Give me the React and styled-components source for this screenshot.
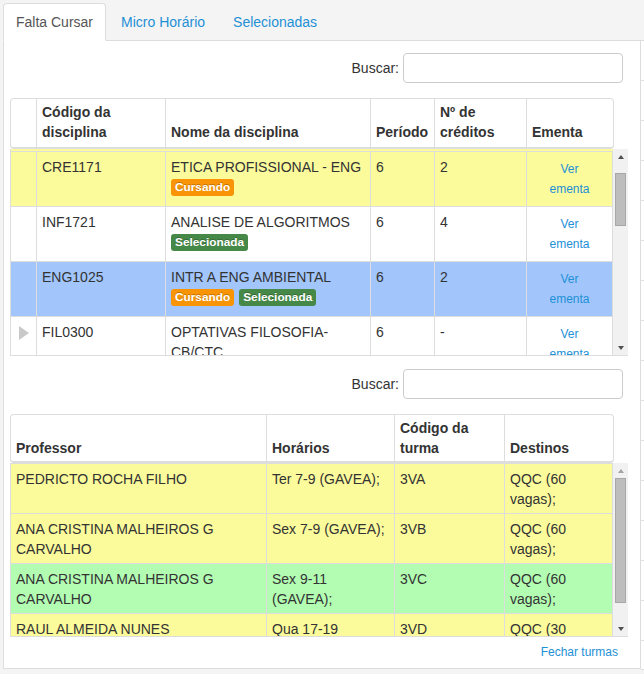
import React from 'react'
import styled, { createGlobalStyle } from 'styled-components'

const GlobalStyle = createGlobalStyle`
    html, body {
        margin: 0;
        padding: 0;
        background: #f4f4f4;
        font-family: "Liberation Sans", Arial, sans-serif;
        font-size: 14px;
        color: #333333;
    }
`;

const LINK = '#1e90d6';

const Page = styled.div`
    display: flex;
    align-items: flex-start;
    padding: 3px 0 0 3px;
    height: 674px;
    box-sizing: border-box;
    overflow: hidden;
`;

const Panel = styled.div`
    width: 638px;
    flex-shrink: 0;
    display: flex;
    flex-direction: column;
`;

const TabBar = styled.ul`
    display: flex;
    margin: 0;
    padding: 0;
    list-style: none;
    border-bottom: 1px solid #dddddd;
`;

const Tab = styled.li`
    padding: 9px 12px 8px;
    line-height: 19px;
    margin-right: 2px;
    margin-bottom: -1px;
    border: 1px solid ${p => (p.$active ? '#dddddd' : 'transparent')};
    border-bottom-color: ${p => (p.$active ? '#ffffff' : 'transparent')};
    border-radius: 4px 4px 0 0;
    background: ${p => (p.$active ? '#ffffff' : 'transparent')};
    color: ${p => (p.$active ? '#555555' : LINK)};
`;

const TabContent = styled.div`
    background: #ffffff;
    border: 1px solid #dddddd;
    border-top: none;
    height: 627px;
    padding: 0 11px 0 6px;
    display: flex;
    flex-direction: column;
`;

const SearchRow = styled.div`
    display: flex;
    justify-content: flex-end;
    align-items: center;
    gap: 4px;
    padding-right: 6px;
    margin-top: ${p => p.$top}px;
    label {
        color: #333333;
    }
    input {
        width: 220px;
        height: 30px;
        box-sizing: border-box;
        border: 1px solid #cccccc;
        border-radius: 4px;
        font: inherit;
        outline: none;
    }
`;

const TableHead = styled.div`
    margin-top: 15px;
    width: 604px;
    height: ${p => p.$height}px;
    box-sizing: border-box;
    border: 1px solid #dddddd;
    border-bottom-width: 2px;
    border-radius: 4px;
    display: grid;
    grid-template-columns: ${p => p.$cols};
    font-weight: bold;
`;

const HeadCell = styled.div`
    display: flex;
    align-items: flex-end;
    padding: 0 5px ${p => p.$pb}px;
    line-height: 20px;
    border-right: 1px solid #dddddd;
    &:last-child {
        border-right: none;
    }
`;

const TableBody = styled.div`
    display: flex;
    height: ${p => p.$height}px;
    width: 618px;
    box-sizing: border-box;
    border-left: 1px solid #dddddd;
    border-bottom: 1px solid #dddddd;
    overflow: hidden;
`;

const Rows = styled.div`
    width: 602px;
    flex-shrink: 0;
    overflow: hidden;
`;

const Row = styled.div`
    display: grid;
    grid-template-columns: ${p => p.$cols};
    height: ${p => p.$height}px;
    box-sizing: border-box;
    border-top: 1px solid #dddddd;
    background: ${p => p.$bg};
    &:first-child {
        border-top: none;
        padding-top: ${p => p.$firstGap}px;
        height: ${p => p.$height + p.$firstGap - 1}px;
        background-image: linear-gradient(#dddddd, #dddddd);
        background-size: 100% 1px;
        background-position: 0 ${p => p.$firstGap - 1}px;
        background-repeat: no-repeat;
    }
`;

const Cell = styled.div`
    padding: 5px;
    line-height: 20px;
    border-right: 1px solid #dddddd;
    overflow: hidden;
`;

const EmentaCell = styled(Cell)`
    display: flex;
    align-items: center;
    justify-content: center;
    text-align: center;
    padding: 0 18px;
    font-size: 12px;
    color: ${LINK};
`;

const ExpandCell = styled(Cell)`
    display: flex;
    justify-content: center;
    padding-top: 8px;
`;

const Badges = styled.div`
    display: flex;
    gap: 5px;
    margin-top: 2px;
`;

const Badge = styled.span`
    display: inline-block;
    padding: 2px 4px;
    font-size: 11.844px;
    font-weight: bold;
    line-height: 13px;
    color: #ffffff;
    border-radius: 3px;
    text-shadow: 0 -1px 0 rgba(0, 0, 0, 0.25);
    background: ${p => (p.$kind === 'cursando' ? '#f89406' : '#468847')};
`;

const Scrollbar = styled.div`
    width: 15px;
    flex-shrink: 0;
    background: #f1f1f1;
    display: flex;
    flex-direction: column;
    align-items: center;
`;

const Arrow = styled.div`
    height: 15px;
    width: 15px;
    display: flex;
    align-items: center;
    justify-content: center;
    flex-shrink: 0;
    &::after {
        content: '';
        width: 0;
        height: 0;
        border-left: 3.5px solid transparent;
        border-right: 3.5px solid transparent;
        ${p => (p.$down ? 'border-top' : 'border-bottom')}: 4px solid ${p => (p.$disabled ? '#a3a3a3' : '#505050')};
    }
`;

const Thumb = styled.div`
    width: 11px;
    box-sizing: border-box;
    margin-top: ${p => p.$top}px;
    height: ${p => p.$height}px;
    background: #bdbdbd;
    border: 1px solid #a8a8a8;
`;

const Spacer = styled.div`
    flex: 1;
`;

const Footer = styled.div`
    display: flex;
    justify-content: flex-end;
    padding-right: 11px;
    margin-top: 7px;
    font-size: 12px;
    line-height: 16px;
    color: ${LINK};
`;

const SideStrip = styled.div`
    flex: 1;
    margin-top: 37px;
    height: 628px;
    background: repeating-linear-gradient(#ffffff 0 39px, #e3e3e3 39px 40px);
    border-top: 1px solid #dddddd;
    border-bottom: 1px solid #dddddd;
`;

const COLS1 = '26px 129px 205px 64px 92px 86px';
const COLS2 = '256px 128px 110px 108px';

const YELLOW = '#fbfb9c';
const BLUE = '#a2c6fc';
const GREEN = '#b3fdb3';
const WHITE = '#ffffff';

const disciplinas = [
    { code: 'CRE1171', name: 'ETICA PROFISSIONAL - ENG', per: '6', cr: '2', bg: YELLOW, badges: ['cursando'] },
    { code: 'INF1721', name: 'ANALISE DE ALGORITMOS', per: '6', cr: '4', bg: WHITE, badges: ['selecionada'] },
    { code: 'ENG1025', name: 'INTR A ENG AMBIENTAL', per: '6', cr: '2', bg: BLUE, badges: ['cursando', 'selecionada'] },
    { code: 'FIL0300', name: 'OPTATIVAS FILOSOFIA-CB/CTC', per: '6', cr: '-', bg: WHITE, badges: [], expand: true },
];

const turmas = [
    { prof: 'PEDRICTO ROCHA FILHO', hor: 'Ter 7-9 (GAVEA);', cod: '3VA', dest: 'QQC (60 vagas);', bg: YELLOW },
    { prof: 'ANA CRISTINA MALHEIROS G CARVALHO', hor: 'Sex 7-9 (GAVEA);', cod: '3VB', dest: 'QQC (60 vagas);', bg: YELLOW },
    { prof: 'ANA CRISTINA MALHEIROS G CARVALHO', hor: 'Sex 9-11 (GAVEA);', cod: '3VC', dest: 'QQC (60 vagas);', bg: GREEN },
    { prof: 'RAUL ALMEIDA NUNES', hor: 'Qua 17-19', cod: '3VD', dest: 'QQC (30 vagas);', bg: YELLOW },
];

const badgeLabel = { cursando: 'Cursando', selecionada: 'Selecionada' };

function ScrollTrack({ thumbTop, thumbHeight, upDisabled }) {
    return (
        <Scrollbar>
            <Arrow $disabled={upDisabled} />
            <Thumb $top={thumbTop} $height={thumbHeight} />
            <Spacer />
            <Arrow $down />
        </Scrollbar>
    );
}

export default function App() {
    return (
        <>
            <GlobalStyle />
            <Page>
                <Panel>
                    <TabBar>
                        <Tab $active>Falta Cursar</Tab>
                        <Tab>Micro Horário</Tab>
                        <Tab>Selecionadas</Tab>
                    </TabBar>
                    <TabContent>
                        <SearchRow $top={12}>
                            <label>Buscar:</label>
                            <input type="text" />
                        </SearchRow>

                        <TableHead $cols={COLS1} $height={51}>
                            <HeadCell $pb={5} />
                            <HeadCell $pb={5}>Código da disciplina</HeadCell>
                            <HeadCell $pb={5}>Nome da disciplina</HeadCell>
                            <HeadCell $pb={5}>Período</HeadCell>
                            <HeadCell $pb={5}>Nº de créditos</HeadCell>
                            <HeadCell $pb={5}>Ementa</HeadCell>
                        </TableHead>
                        <TableBody $height={207}>
                            <Rows>
                                {disciplinas.map(d => (
                                    <Row key={d.code} $cols={COLS1} $height={55} $firstGap={3} $bg={d.bg}>
                                        <ExpandCell>
                                            {d.expand && (
                                                <svg width="12" height="16" viewBox="0 0 12 16">
                                                    <polygon points="1,1 11,8 1,15" fill="#c9c9c9" />
                                                </svg>
                                            )}
                                        </ExpandCell>
                                        <Cell>{d.code}</Cell>
                                        <Cell>
                                            {d.name}
                                            {d.badges.length > 0 && (
                                                <Badges>
                                                    {d.badges.map(b => (
                                                        <Badge key={b} $kind={b}>{badgeLabel[b]}</Badge>
                                                    ))}
                                                </Badges>
                                            )}
                                        </Cell>
                                        <Cell>{d.per}</Cell>
                                        <Cell>{d.cr}</Cell>
                                        <EmentaCell>Ver ementa</EmentaCell>
                                    </Row>
                                ))}
                            </Rows>
                            <ScrollTrack thumbTop={9} thumbHeight={53} />
                        </TableBody>

                        <SearchRow $top={13}>
                            <label>Buscar:</label>
                            <input type="text" />
                        </SearchRow>

                        <TableHead $cols={COLS2} $height={49}>
                            <HeadCell $pb={3}>Professor</HeadCell>
                            <HeadCell $pb={3}>Horários</HeadCell>
                            <HeadCell $pb={3}>Código da turma</HeadCell>
                            <HeadCell $pb={3}>Destinos</HeadCell>
                        </TableHead>
                        <TableBody $height={174}>
                            <Rows>
                                {turmas.map(t => (
                                    <Row key={t.cod} $cols={COLS2} $height={50} $firstGap={1} $bg={t.bg}>
                                        <Cell>{t.prof}</Cell>
                                        <Cell>{t.hor}</Cell>
                                        <Cell>{t.cod}</Cell>
                                        <Cell>{t.dest}</Cell>
                                    </Row>
                                ))}
                            </Rows>
                            <ScrollTrack thumbTop={0} thumbHeight={125} upDisabled />
                        </TableBody>

                        <Footer>Fechar turmas</Footer>
                    </TabContent>
                </Panel>
                <SideStrip />
            </Page>
        </>
    );
}
